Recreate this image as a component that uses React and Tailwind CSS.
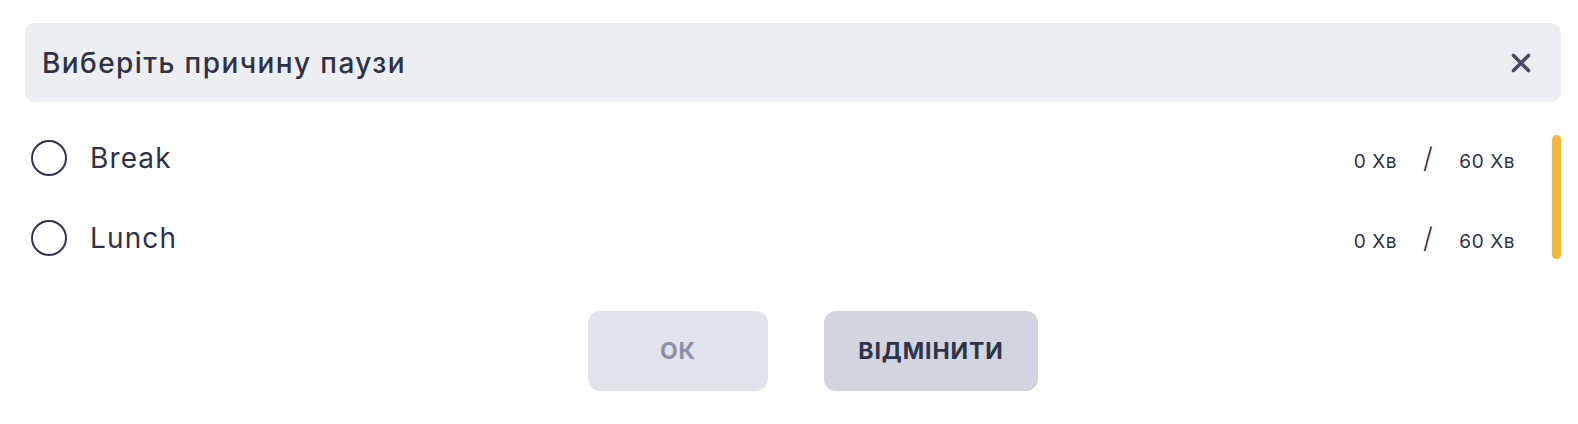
import React, { useState } from "react";

const reasons = [
  { id: "break", name: "Break", used: 0, limit: 60 },
  { id: "lunch", name: "Lunch", used: 0, limit: 60 },
];

const PauseDialog = () => {
  const [selected, setSelected] = useState(null);

  return (
    <div className="w-full bg-white pt-[23px] pl-[25px] pr-[17px] pb-[33px] font-['Inter','Noto_Sans',sans-serif] text-[#2f3247]">
      {/* Header */}
      <div className="flex h-[79px] items-center justify-between rounded-[10px] bg-[#edeef2] pl-[17px] pr-[30px]">
        <h2 className="text-[28px] font-medium tracking-[0.05em]">Виберіть причину паузи</h2>
        <button className="flex h-[20px] w-[20px] items-center justify-center text-[#464c63]">
          <svg viewBox="0 0 20 20" className="h-[20px] w-[20px]" fill="none" stroke="currentColor" strokeWidth="3.6" strokeLinecap="round">
            <path d="M2.5 2.5 L17.5 17.5 M17.5 2.5 L2.5 17.5" />
          </svg>
        </button>
      </div>

      {/* List */}
      <div className="mt-[16px] flex">
        <div className="flex-1">
          {reasons.map((r) => (
            <div
              key={r.id}
              onClick={() => setSelected(r.id)}
              className="flex h-[80px] cursor-pointer items-center pl-[6px]"
            >
              <div className="flex h-[36px] w-[36px] shrink-0 items-center justify-center rounded-full border-2 border-[#2f3349]">
                {selected === r.id && <div className="h-[18px] w-[18px] rounded-full bg-[#2f3349]"></div>}
              </div>
              <div className="ml-[23px] flex flex-1 items-baseline justify-between">
                <span className="text-[28px] tracking-[0.04em]">{r.name}</span>
                <div className="mr-[-2px] flex items-baseline text-[19px] tracking-[0.03em]">
                  <span>{r.used} Хв</span>
                  <span className="mx-[26px] text-[28px] font-light">/</span>
                  <span>{r.limit} Хв</span>
                </div>
              </div>
            </div>
          ))}
        </div>
        <div className="ml-[39px] mt-[17px] h-[124px] w-[9px] rounded-full bg-[#f2b73f]"></div>
      </div>

      {/* Buttons */}
      <div className="mt-[33px] flex gap-[56px] pl-[563px]">
        <button className="h-[80px] w-[180px] rounded-[12px] bg-[#e1e3ea] text-[23px] font-bold tracking-[0.04em] text-[#8a90aa]">
          ОК
        </button>
        <button className="h-[80px] w-[214px] rounded-[12px] bg-[#d2d4df] text-[23px] font-bold tracking-[0.04em] text-[#2f3347]">
          ВІДМІНИТИ
        </button>
      </div>
    </div>
  );
};

export default function App() {
  return <PauseDialog />;
}
